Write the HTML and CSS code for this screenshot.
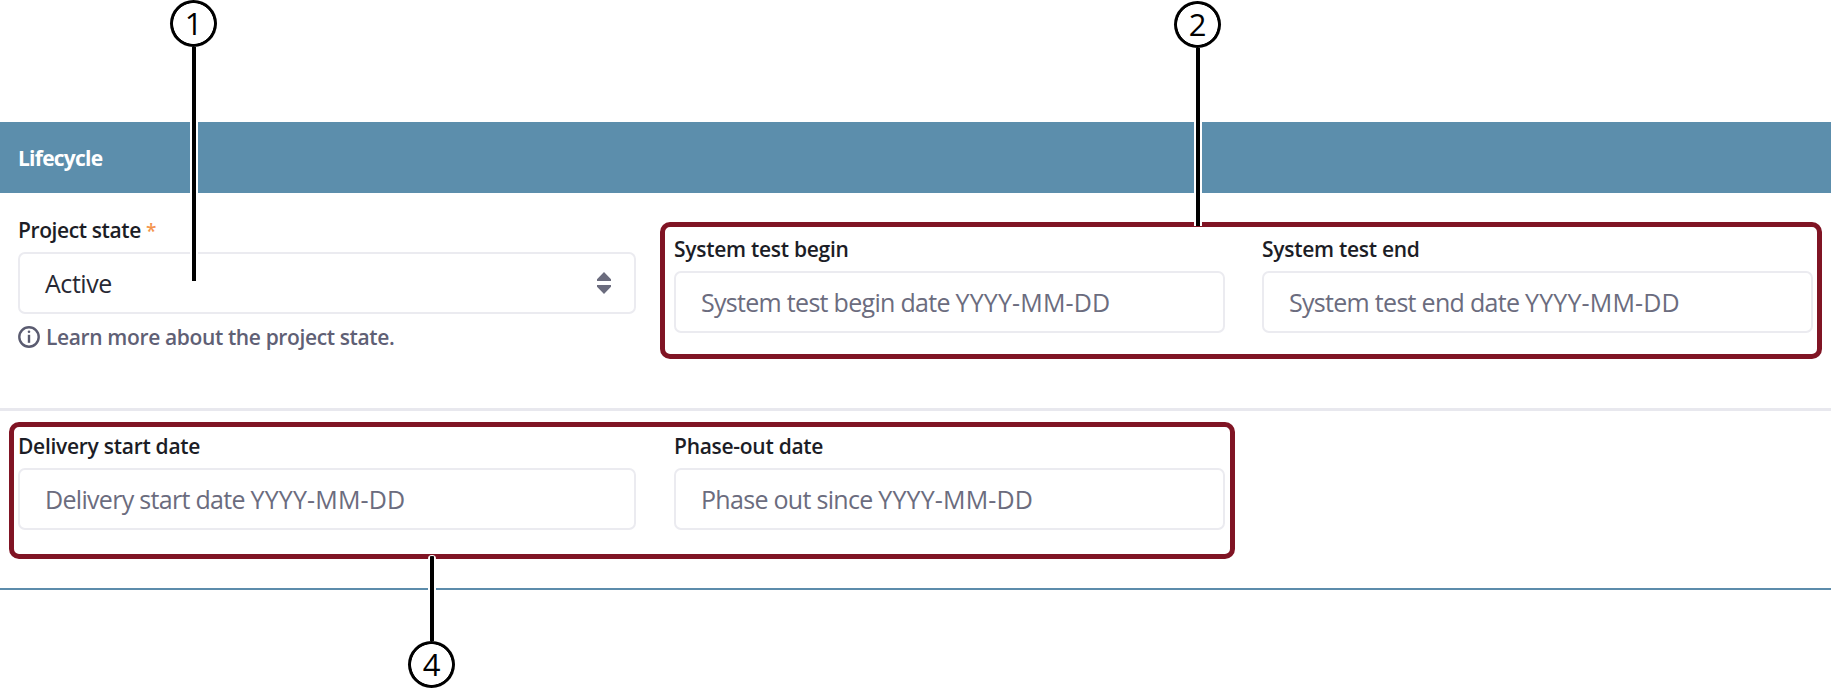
FILE: index.html
```html
<!DOCTYPE html>
<html lang="en">
<head>
<meta charset="utf-8">
<title>Lifecycle</title>
<link rel="stylesheet" href="styles.css">
</head>
<body>
<main class="page">
  <section class="card">
    <h2 class="card-title">Lifecycle</h2>
    <div class="row row-state">
      <div class="field wide">
        <div class="label"><span class="l-state">Project state</span> <span class="required">*</span></div>
        <div class="control"><span class="value">Active</span>
          <svg class="sort" width="14" height="22" viewBox="0 0 14 22"><path d="M7 0 14 7.2V9H0V7.2ZM7 22 14 14.8V13H0v1.8Z"/></svg>
        </div>
        <div class="help"><svg class="info" width="22" height="22" viewBox="0 0 22 22"><circle cx="11" cy="11" r="9.7"/><path d="M11 8.8v8"/><circle class="dot" cx="11" cy="5.8" r="1.3"/></svg><span>Learn more about the project state.</span></div>
      </div>
      <div class="highlight tests">
        <div class="field">
          <div class="label">System test begin</div>
          <div class="control"><span class="hint">System test begin date <span class="format">YYYY-MM-DD</span></span></div>
        </div>
        <div class="field">
          <div class="label">System test end</div>
          <div class="control"><span class="hint">System test end date <span class="format">YYYY-MM-DD</span></span></div>
        </div>
      </div>
    </div>
    <div class="row row-dates">
      <div class="highlight dates">
        <div class="field wide">
          <div class="label">Delivery start date</div>
          <div class="control"><span class="hint">Delivery start date <span class="format">YYYY-MM-DD</span></span></div>
        </div>
        <div class="field">
          <div class="label">Phase-out date</div>
          <div class="control"><span class="hint">Phase out since <span class="format">YYYY-MM-DD</span></span></div>
        </div>
      </div>
    </div>
  </section>
  <div class="callout c1"><span class="badge">1</span><i class="lead"></i></div>
  <div class="callout c2"><span class="badge">2</span><i class="lead"></i></div>
  <div class="callout c4"><i class="lead"></i><span class="badge">4</span></div>
</main>
</body>
</html>
```
FILE: styles.css
```css
* { box-sizing: border-box; }
body { margin: 0; background: #fff; font-family: "Open Sans", "Noto Sans", sans-serif; color: #272833; }
.page { position: relative; height: 693px; overflow: hidden; padding-top: 122px; }
.card { height: 468px; border-bottom: 2px solid #5c8cab; }
.card-title { margin: 0; height: 71px; padding: 0 0 0 18px; display: flex; align-items: center; background: #5c8eac; color: #fff; font-size: 21px; font-weight: 700; line-height: 28px; letter-spacing: -.75px; }
.row { display: flex; }
.row-state { height: 218px; border-bottom: 3px solid #e8e8ee; padding-left: 18px; align-items: flex-start; }
.row-state > .field { padding-top: 22px; margin-right: 24px; }
.field { flex: none; width: 551px; }
.field.wide { width: 618px; }
.label { font-size: 21px; font-weight: 600; line-height: 30px; height: 37px; color: #1c1d26; letter-spacing: -.28px; white-space: nowrap; }
.l-state { letter-spacing: -.4px; }
.required { color: #f4954e; font-size: 19px; font-weight: 600; line-height: 18px; }
.control { height: 62px; border: 2px solid #ebebf0; border-radius: 7px; display: flex; align-items: center; padding: 0 23px 1px 25px; font-size: 25px; line-height: 34px; color: #6b6c7e; white-space: nowrap; }
.value { color: #272833; letter-spacing: -.45px; }
.hint { letter-spacing: -.7px; }
.format { letter-spacing: .15px; }
.sort { margin-left: auto; fill: #6b6c7e; }
.help { display: flex; align-items: center; gap: 6px; margin-top: 9px; color: #5f6075; font-size: 21px; font-weight: 600; line-height: 28px; letter-spacing: -.37px; white-space: nowrap; }
.info { fill: none; stroke: #5a5b70; stroke-width: 2.4; }
.info .dot { fill: #5a5b70; stroke: none; }
.highlight { display: flex; border: 5px solid #801424; border-radius: 10px; height: 137px; }
.tests { width: 1162px; margin-top: 29px; padding: 7px 0 0 9px; gap: 37px; }
.row-dates { padding: 11px 0 0 9px; }
.dates { width: 1226px; padding: 4px 0 0 4px; gap: 38px; }
.callout { position: absolute; width: 47px; display: flex; flex-direction: column; align-items: center; z-index: 1; }
.badge { flex: none; width: 47px; height: 47px; padding-bottom: 2px; border-radius: 50%; background: radial-gradient(circle, #fff 20px, #000 20.7px); color: #000; display: flex; align-items: center; justify-content: center; font-size: 31px; line-height: 40px; }
.lead { flex: 1; width: 8px; background: linear-gradient(90deg, #fff 2px, #000 2px 6px, #fff 6px); }
.c1 { left: 170px; top: 0; height: 281px; }
.c2 { left: 1174px; top: 1px; height: 225px; }
.c4 { left: 408px; top: 555px; height: 133px; }
.c4 .lead { border-top: 1px solid #fff; border-radius: 4px 4px 0 0; }
```
